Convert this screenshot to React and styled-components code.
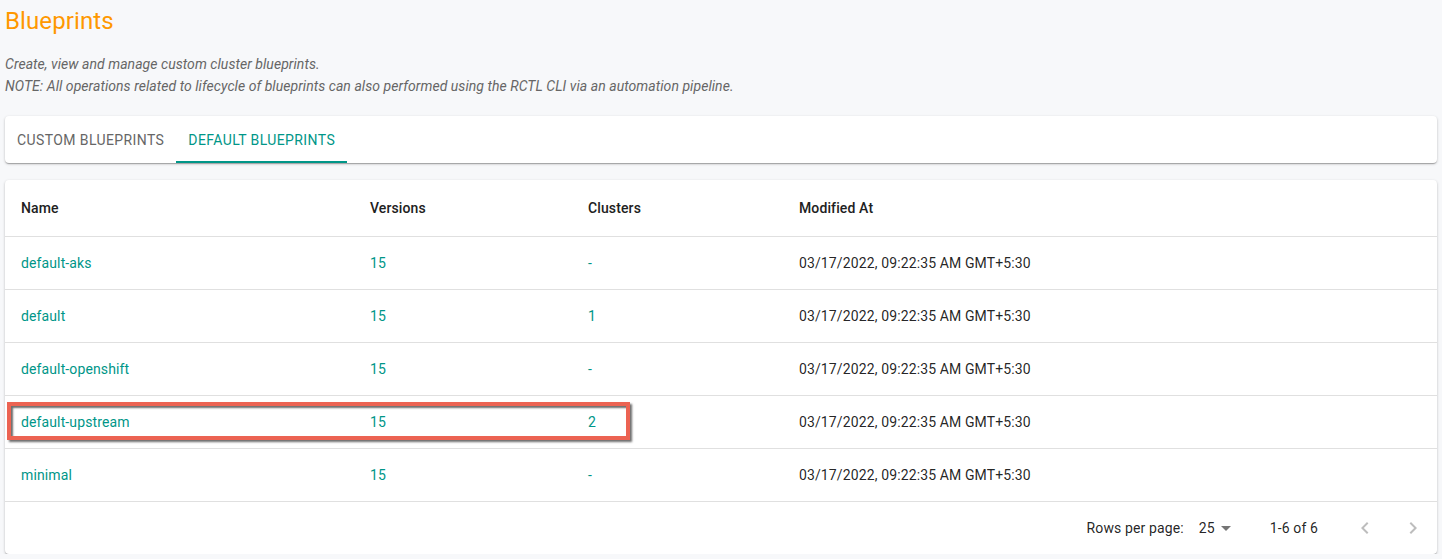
import React from "react";
import styled, { createGlobalStyle } from "styled-components";

const Global = createGlobalStyle`
  html, body { margin: 0; padding: 0; background: #f7f8fa; }
  body { font-family: Roboto, "Liberation Sans", Arial, sans-serif; color: rgba(0,0,0,0.87); }
  * { box-sizing: border-box; }
`;

const Page = styled.div`
  padding: 7px 5px 0 5px;
  width: 1442px;
`;

const Title = styled.h1`
  margin: 0;
  font-size: 24px;
  line-height: 28px;
  font-weight: 400;
  letter-spacing: 0.1px;
  color: #ff9800;
`;

const Description = styled.div`
  margin-top: 18px;
  font-size: 14px;
  line-height: 22px;
  font-style: italic;
  letter-spacing: 0.05px;
  color: #666;
`;

const TabsCard = styled.div`
  margin-top: 19px;
  height: 47px;
  background: #fff;
  border-radius: 4px;
  box-shadow: 0 1px 3px rgba(0,0,0,0.2), 0 1px 1px rgba(0,0,0,0.14), 0 2px 1px -1px rgba(0,0,0,0.12);
  display: flex;
  align-items: stretch;
`;

const Tab = styled.div`
  padding: 0 12px;
  display: flex;
  align-items: center;
  font-size: 14px;
  letter-spacing: 0.4px;
  text-transform: uppercase;
  color: ${(p) => (p.$active ? "#009688" : "#666")};
  border-bottom: 2px solid ${(p) => (p.$active ? "#009688" : "transparent")};
  padding-top: 2px;
`;

const TableCard = styled.div`
  margin-top: 17px;
  background: #fff;
  border-radius: 4px;
  box-shadow: 0 1px 3px rgba(0,0,0,0.2), 0 1px 1px rgba(0,0,0,0.14), 0 2px 1px -1px rgba(0,0,0,0.12);
`;

const Row = styled.div`
  position: relative;
  display: grid;
  grid-template-columns: 349px 218px 211px 1fr;
  height: ${(p) => (p.$header ? "57px" : "53px")};
  border-bottom: 1px solid #e0e0e0;
  align-items: center;
`;

const Cell = styled.div`
  padding-left: 16px;
  font-size: 14px;
  letter-spacing: 0.12px;
  font-weight: ${(p) => (p.$header ? 500 : 400)};
  color: ${(p) => (p.$header ? "#212121" : p.$link ? "#009688" : "rgba(0,0,0,0.87)")};
`;

const Highlight = styled.div`
  position: absolute;
  left: 2px;
  top: 6px;
  width: 623px;
  height: 38px;
  border: 4px solid #ec6352;
  box-shadow: inset 2px 2px 2px rgba(60,60,60,0.75), 2px 2px 2px rgba(60,60,60,0.75);
  pointer-events: none;
`;

const Footer = styled.div`
  height: 52px;
  display: flex;
  align-items: center;
  justify-content: flex-end;
  font-size: 14px;
  letter-spacing: 0.12px;
  color: rgba(0,0,0,0.87);
`;

const Caption = styled.span``;

const Select = styled.div`
  margin-left: 15px;
  margin-right: 39px;
  display: flex;
  align-items: center;
  gap: 6px;
`;

const Actions = styled.div`
  margin-left: 23px;
  display: flex;
`;

const IconButton = styled.div`
  width: 48px;
  height: 48px;
  display: flex;
  align-items: center;
  justify-content: center;
  color: #bdbdbd;
`;

const rows = [
  { name: "default-aks", versions: "15", clusters: "-" },
  { name: "default", versions: "15", clusters: "1" },
  { name: "default-openshift", versions: "15", clusters: "-" },
  { name: "default-upstream", versions: "15", clusters: "2", highlight: true },
  { name: "minimal", versions: "15", clusters: "-" },
];

export default function App() {
  return (
    <>
      <Global />
      <Page>
        <Title>Blueprints</Title>
        <Description>
          Create, view and manage custom cluster blueprints.
          <br />
          NOTE: All operations related to lifecycle of blueprints can also performed using the RCTL CLI via an automation pipeline.
        </Description>
        <TabsCard>
          <Tab>Custom Blueprints</Tab>
          <Tab $active>Default Blueprints</Tab>
        </TabsCard>
        <TableCard>
          <Row $header>
            <Cell $header>Name</Cell>
            <Cell $header>Versions</Cell>
            <Cell $header>Clusters</Cell>
            <Cell $header>Modified At</Cell>
          </Row>
          {rows.map((r) => (
            <Row key={r.name}>
              <Cell $link>{r.name}</Cell>
              <Cell $link>{r.versions}</Cell>
              <Cell $link>{r.clusters}</Cell>
              <Cell>03/17/2022, 09:22:35 AM GMT+5:30</Cell>
              {r.highlight && <Highlight />}
            </Row>
          ))}
          <Footer>
            <Caption>Rows per page:</Caption>
            <Select>
              <span>25</span>
              <svg width="10" height="5" viewBox="0 0 10 5">
                <path d="M0 0 L10 0 L5 5 Z" fill="rgba(0,0,0,0.54)" />
              </svg>
            </Select>
            <Caption>1-6 of 6</Caption>
            <Actions>
              <IconButton>
                <svg width="24" height="24" viewBox="0 0 24 24">
                  <path d="M15.41 7.41 14 6l-6 6 6 6 1.41-1.41L10.83 12z" fill="currentColor" />
                </svg>
              </IconButton>
              <IconButton>
                <svg width="24" height="24" viewBox="0 0 24 24">
                  <path d="M10 6 8.59 7.41 13.17 12l-4.58 4.59L10 18l6-6z" fill="currentColor" />
                </svg>
              </IconButton>
            </Actions>
          </Footer>
        </TableCard>
      </Page>
    </>
  );
}
